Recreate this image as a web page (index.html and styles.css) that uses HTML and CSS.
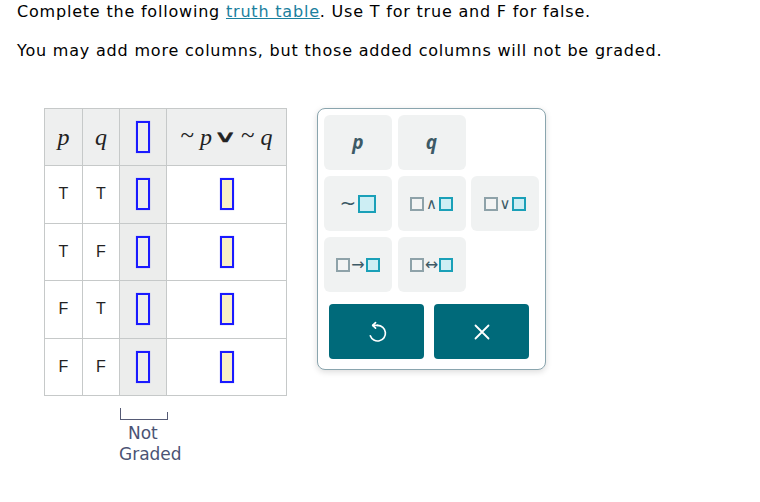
FILE: index.html
```html
<!DOCTYPE html>
<html>
<head>
<meta charset="utf-8">
<link rel="stylesheet" href="styles.css">
</head>
<body>
<div class="page">
  <p class="line1">Complete the following <a class="link" href="#">truth table</a>. Use T for true and F for false.</p>
  <p class="line2">You may add more columns, but those added columns will not be graded.</p>
  <div class="work">
    <div class="tablewrap">
      <table class="tt">
        <tr>
          <th class="c1 var"><i>p</i></th>
          <th class="c2 var"><i>q</i></th>
          <th class="c3 ng"><span class="box"></span></th>
          <th class="c4 expr"><span class="tl">~</span><i>p</i><span class="or">∨</span><span class="tl">~</span><i>q</i></th>
        </tr>
        <tr><td>T</td><td>T</td><td class="ng"><span class="box"></span></td><td><span class="box ans"></span></td></tr>
        <tr><td>T</td><td>F</td><td class="ng"><span class="box"></span></td><td><span class="box ans"></span></td></tr>
        <tr><td>F</td><td>T</td><td class="ng"><span class="box"></span></td><td><span class="box ans"></span></td></tr>
        <tr><td>F</td><td>F</td><td class="ng"><span class="box"></span></td><td><span class="box ans"></span></td></tr>
      </table>
      <div class="bracket"></div>
      <div class="note">
        <div class="n1">Not</div>
        <div class="n2">Graded</div>
      </div>
    </div>
    <div class="panel">
      <div class="keys">
        <button class="key"><span class="kv">p</span></button>
        <button class="key"><span class="kv">q</span></button>
        <span class="blank"></span>
        <button class="key"><span class="tilde">~</span><span class="sq big teal"></span></button>
        <button class="key"><span class="sq gray"></span><span class="op">∧</span><span class="sq teal"></span></button>
        <button class="key"><span class="sq gray"></span><span class="op">∨</span><span class="sq teal"></span></button>
        <button class="key"><span class="sq gray"></span><span class="arr">→</span><span class="sq teal"></span></button>
        <button class="key"><span class="sq gray"></span><span class="arr">↔</span><span class="sq teal"></span></button>
      </div>
      <div class="actions">
        <button class="act">
          <svg width="24" height="24" viewBox="0 0 20 20" fill="none" stroke="#fff" stroke-width="1.4" stroke-linecap="round" stroke-linejoin="round">
            <path d="M10.5 4.5 H6.5"/>
            <path d="M8.8 2.2 L6.4 4.5 L8.8 6.8"/>
            <path d="M10.5 4.5 A6.5 6.5 0 1 1 4.4 13.2"/>
          </svg>
        </button>
        <button class="act">
          <svg width="16" height="16" viewBox="0 0 16 16" fill="none" stroke="#fff" stroke-width="1.8" stroke-linecap="round">
            <path d="M1.5 1.5 L14.5 14.5 M14.5 1.5 L1.5 14.5"/>
          </svg>
        </button>
      </div>
    </div>
  </div>
</div>
</body>
</html>
```
FILE: styles.css
```css
html, body {
  margin: 0;
  padding: 0;
  background: #fff;
}
.page {
  padding: 2px 0 0 17px;
  font-family: "DejaVu Sans", Verdana, sans-serif;
  font-size: 16px;
  color: #000;
}
.line1, .line2 {
  margin: 0;
  line-height: 20px;
  letter-spacing: 0.8px;
}
.line2 {
  margin-top: 19px;
}
.link {
  color: #1b809e;
  text-decoration: underline;
}
.work {
  display: flex;
  align-items: flex-start;
  gap: 30px;
  margin-top: 47px;
  margin-left: 27px;
}
.tt {
  border-collapse: collapse;
  font-family: "Liberation Sans", Arial, sans-serif;
  font-size: 16px;
  color: #222;
}
.tt th, .tt td {
  border: 1px solid #c6c9c9;
  padding: 0;
  text-align: center;
  vertical-align: middle;
}
.tt th {
  height: 56px;
  background: #eeefef;
  font-weight: normal;
}
.tt td {
  height: 56.5px;
}
.c1 { width: 37px; }
.c2 { width: 36px; }
.c3 { width: 46px; }
.c4 { width: 119px; }
.var, .expr {
  font-family: "Liberation Serif", "Times New Roman", serif;
  font-size: 24px;
  color: #222;
}
.expr {
  white-space: nowrap;
}
.tl {
  display: inline-block;
  font-size: 25px;
  position: relative;
  top: -2px;
  margin-right: 6px;
}
.or {
  display: inline-block;
  font-family: "DejaVu Sans", sans-serif;
  font-weight: normal;
  font-size: 22px;
  transform: scale(1.45, 0.72);
  position: relative;
  top: -1px;
  margin: 0 8px 0 5px;
  -webkit-text-stroke: 0.6px #222;
}
.tt td.ng, .tt th.ng {
  background: #ecedec;
}
.box {
  display: inline-block;
  vertical-align: middle;
  width: 10px;
  height: 28px;
  border: 2px solid #1a1aff;
  box-shadow: 0 0 1px rgba(60, 60, 255, 0.5);
  background: transparent;
}
.box.ans {
  background: #f9efc8;
}
.bracket {
  width: 47px;
  height: 11px;
  margin: 12px 0 0 76px;
  border-left: 1px solid #555a75;
  border-bottom: 1px solid #555a75;
  position: relative;
}
.bracket::after {
  content: "";
  position: absolute;
  right: 0;
  top: 4px;
  bottom: 0;
  border-right: 1px solid #555a75;
}
.note {
  margin: 3px 0 0 75px;
  font-family: "DejaVu Sans", Verdana, sans-serif;
  font-size: 17px;
  line-height: 21px;
  color: #4b5374;
}
.n1 {
  padding-left: 9px;
}
.panel {
  box-sizing: border-box;
  width: 229px;
  border: 1px solid #8aa5ae;
  border-radius: 8px;
  padding: 6px;
  box-shadow: 0 2px 6px rgba(0, 0, 0, 0.14);
  background: #fff;
}
.keys {
  display: grid;
  grid-template-columns: repeat(3, 68px);
  grid-auto-rows: 55px;
  column-gap: 5.5px;
  row-gap: 6px;
}
.key {
  border: none;
  margin: 0;
  padding: 0;
  border-radius: 6px;
  background: #f0f2f2;
  display: flex;
  align-items: center;
  justify-content: center;
  font-family: "DejaVu Sans", sans-serif;
  color: #3d5a66;
}
.kv {
  font-family: "Open Sans", sans-serif;
  font-weight: bold;
  font-style: italic;
  font-size: 19px;
  color: #3d5a66;
  position: relative;
  top: -1px;
}
.tilde {
  font-size: 20px;
  margin-right: 2px;
  position: relative;
  top: -1px;
}
.sq {
  display: inline-block;
  box-sizing: border-box;
  width: 14px;
  height: 14px;
  border: 2px solid #8ea2a9;
}
.sq.gray {
  background: #f3f4f4;
}
.sq.teal {
  border-color: #1aa0b8;
  background: #cdeef4;
}
.sq.big {
  width: 18px;
  height: 18px;
}
.op {
  font-size: 15px;
  margin: 0 2px;
  color: #3d5a66;
}
.arr {
  font-size: 16px;
  margin: 0 1px;
  color: #3d5a66;
}
.actions {
  display: flex;
  gap: 10px;
  margin: 12px 0 4px 5px;
}
.act {
  width: 95px;
  height: 55px;
  border: none;
  border-radius: 4px;
  background: #006a7a;
  margin: 0;
  padding: 0;
  display: flex;
  align-items: center;
  justify-content: center;
}
.act svg {
  display: block;
}
```
